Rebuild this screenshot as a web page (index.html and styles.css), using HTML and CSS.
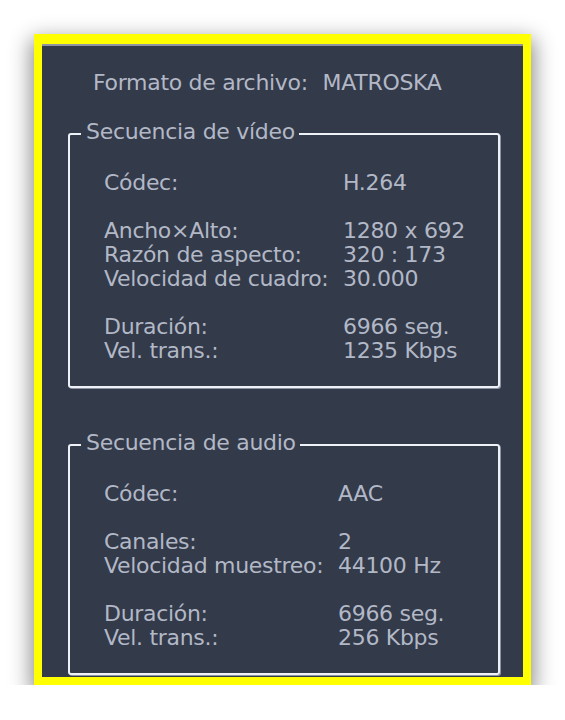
FILE: index.html
```html
<!DOCTYPE html>
<html lang="es">
<head>
<meta charset="utf-8">
<title>Información del archivo</title>
<link rel="stylesheet" href="styles.css">
</head>
<body>
<div class="frame">
  <div class="panel">
    <p class="format">Formato de archivo: <span class="format-value">MATROSKA</span></p>

    <fieldset class="group group-video">
      <legend>Secuencia de vídeo</legend>
      <dl class="rows">
        <dt>Códec:</dt><dd>H.264</dd>
        <dt class="gap">Ancho×Alto:</dt><dd class="gap">1280 x 692</dd>
        <dt>Razón de aspecto:</dt><dd>320 : 173</dd>
        <dt>Velocidad de cuadro:</dt><dd>30.000</dd>
        <dt class="gap">Duración:</dt><dd class="gap">6966 seg.</dd>
        <dt>Vel. trans.:</dt><dd>1235 Kbps</dd>
      </dl>
    </fieldset>

    <fieldset class="group group-audio">
      <legend>Secuencia de audio</legend>
      <dl class="rows">
        <dt>Códec:</dt><dd>AAC</dd>
        <dt class="gap">Canales:</dt><dd class="gap">2</dd>
        <dt>Velocidad muestreo:</dt><dd>44100 Hz</dd>
        <dt class="gap">Duración:</dt><dd class="gap">6966 seg.</dd>
        <dt>Vel. trans.:</dt><dd>256 Kbps</dd>
      </dl>
    </fieldset>
  </div>
</div>
</body>
</html>
```

FILE: styles.css
```css
html, body {
  margin: 0;
  padding: 0;
  background: #ffffff;
}

body {
  padding: 34px 0 0 34px;
  font-family: "DejaVu Sans", "Liberation Sans", sans-serif;
  font-size: 22px;
  line-height: 24px;
  letter-spacing: -0.3px;
  color: #b2b8c6;
}

.frame {
  width: 481px;
  border: 8px solid #ffff00;
  border-top-width: 10px;
  box-shadow: 0 8px 20px 3px rgba(0, 0, 0, 0.45);
}

.panel {
  background: #333a4a;
  border-top: 2px solid #8e94a3;
  padding: 25px 23px 2px 26px;
}

.format {
  margin: 0 0 25px 25px;
}

.format-value {
  margin-left: 8px;
}

.group {
  margin: 0;
  padding: 24px 0 23px 0;
  border: 2px solid #eef1f5;
  border-radius: 3px;
  box-shadow: 1px 1px 0 #8d93a2;
}

.group-audio {
  margin-top: 43px;
}

.group legend {
  margin-left: 11px;
  padding: 0 4px 3px 5px;
}

.rows {
  display: grid;
  margin: 0;
  padding-left: 34px;
}

.group-video .rows {
  grid-template-columns: 239px 1fr;
}

.group-audio .rows {
  grid-template-columns: 234px 1fr;
}

.rows dt,
.rows dd {
  margin: 0;
  white-space: nowrap;
}

.rows .gap {
  margin-top: 24px;
}
```
